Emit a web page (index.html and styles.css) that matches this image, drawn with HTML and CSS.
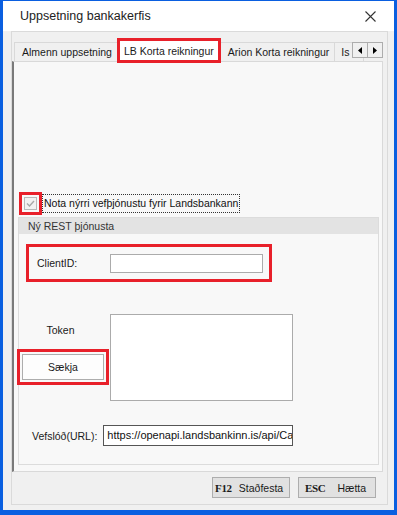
FILE: index.html
```html
<!DOCTYPE html>
<html>
<head>
<meta charset="utf-8">
<link rel="stylesheet" href="styles.css">
</head>
<body>
<div class="window">
  <div class="titlebar">
    <span class="title">Uppsetning bankakerfis</span>
    <svg class="close" width="11" height="11" viewBox="0 0 11 11"><path d="M0.5 0.5 L10.5 10.5 M10.5 0.5 L0.5 10.5" stroke="#333" stroke-width="1.1" fill="none"/></svg>
  </div>
  <div class="client">
    <div class="frame">
      <div class="tabstrip">
        <div class="tab">Almenn uppsetning</div>
        <div class="tab active">LB Korta reikningur</div>
        <div class="tab">Arion Korta reikningur</div>
        <div class="tab clipped">Is</div>
        <div class="scroller">
          <span class="sbtn"><svg width="4" height="7" viewBox="0 0 4 7"><path d="M4 0 L0 3.5 L4 7 Z" fill="#000"/></svg></span>
          <span class="sbtn"><svg width="4" height="7" viewBox="0 0 4 7"><path d="M0 0 L4 3.5 L0 7 Z" fill="#000"/></svg></span>
        </div>
      </div>
      <div class="page">
        <div class="checkrow">
          <span class="checkbox"><svg width="11" height="11" viewBox="0 0 11 11"><path d="M2 5.5 L4.5 8 L9 3" stroke="#a8a8a8" stroke-width="1.4" fill="none"/></svg></span>
          <span class="checklabel">Nota nýrri vefþjónustu fyrir Landsbankann</span>
        </div>
        <div class="group">
          <div class="group-head">Ný REST þjónusta</div>
          <div class="group-body">
            <div class="clientid">
              <span class="lbl-client">ClientID:</span>
              <span class="input short"></span>
            </div>
            <div class="token-row">
              <div class="token-col">
                <span class="lbl-token">Token</span>
                <span class="button">Sækja</span>
              </div>
              <span class="textarea"></span>
            </div>
            <div class="url-row">
              <span class="lbl-url">Vefslóð(URL):</span>
              <span class="input url">https://openapi.landsbankinn.is/api/Cards</span>
            </div>
          </div>
        </div>
      </div>
      <div class="buttons">
        <span class="dlgbtn"><b class="key">F12</b>Staðfesta</span>
        <span class="dlgbtn esc"><b class="key">ESC</b>Hætta</span>
      </div>
    </div>
  </div>
</div>
</body>
</html>
```

FILE: styles.css
```css
html, body {
  margin: 0;
  padding: 0;
  background: #ffffff;
}
.window {
  width: 397px;
  height: 515px;
  box-sizing: border-box;
  border-style: solid;
  border-color: #0a5fe0;
  border-width: 1px 3px 5px 3px;
  display: flex;
  flex-direction: column;
  font-family: "Liberation Sans", Arial, sans-serif;
  color: #1a1a1a;
  overflow: hidden;
}
.titlebar {
  height: 30px;
  flex: none;
  background: #ffffff;
  display: flex;
  align-items: center;
  justify-content: space-between;
  padding: 0 18px 0 17px;
}
.title {
  font-size: 12.5px;
  color: #222;
}
.close {
  display: block;
}
.client {
  flex: 1;
  background: #f0f0f0;
  padding: 0 6px 5px 8px;
}
.frame {
  border: 1px solid #dadada;
  height: 100%;
  box-sizing: border-box;
  padding: 8px 4px 0 0;
  display: flex;
  flex-direction: column;
}
.tabstrip {
  display: flex;
  align-items: flex-end;
  height: 21px;
  position: relative;
  padding-left: 2px;
  font-size: 10.5px;
}
.tab {
  height: 19px;
  box-sizing: border-box;
  border: 1px solid #d9d9d9;
  border-bottom: none;
  background: #f0f0f0;
  padding: 0 5px 0 7px;
  display: flex;
  align-items: center;
  white-space: nowrap;
  margin-right: -1px;
}
.tab.active {
  height: 21px;
  background: #ffffff;
  margin: 0 1px 0 2px;
  padding: 0 4px 0 4px;
  outline: 3px solid #e8202a;
  outline-offset: -1px;
  position: relative;
  z-index: 1;
}
.tab.clipped {
  width: 30px;
  overflow: hidden;
  padding-left: 6px;
}
.scroller {
  position: absolute;
  right: 0;
  top: 2px;
  display: flex;
}
.sbtn {
  width: 16px;
  height: 16px;
  box-sizing: border-box;
  border: 1px solid #adadad;
  background: #f0f0f0;
  display: flex;
  align-items: center;
  justify-content: center;
  margin-left: -1px;
}
.sbtn svg {
  display: block;
}
.page {
  background: #f8f8f8;
  border: 1px solid #d9d9d9;
  border-left: 2px solid #7a7a7a;
  padding: 131px 3px 6px 4px;
  display: flex;
  flex-direction: column;
}
.checkrow {
  display: flex;
  align-items: center;
  height: 20px;
  padding-left: 6px;
  font-size: 10.5px;
}
.checkbox {
  width: 13px;
  height: 13px;
  box-sizing: border-box;
  border: 1px solid #b9b9b9;
  background: #f2f2f2;
  display: flex;
  align-items: center;
  justify-content: center;
  outline: 3px solid #e8202a;
  outline-offset: 2px;
  margin-right: 5px;
  margin-top: 1px;
}
.checkbox svg { display: block; }
.checklabel {
  border: 1px dotted #333;
  padding: 2px 1px 2px 1px;
  line-height: 13px;
  color: #111;
}
.group {
  margin-top: 4px;
  border: 1px solid #dcdcdc;
}
.group-head {
  background: #e3e3e3;
  height: 16px;
  line-height: 16px;
  font-size: 10.5px;
  padding-left: 9px;
  color: #333;
}
.group-body {
  padding: 10px 0 18px 7px;
  font-size: 10.5px;
}
.clientid {
  width: 246px;
  height: 38px;
  box-sizing: border-box;
  border: 3px solid #e8202a;
  display: flex;
  align-items: center;
  padding-left: 8px;
}
.lbl-client {
  width: 73px;
}
.input {
  display: block;
  background: #ffffff;
  border: 1px solid #ababab;
  box-sizing: border-box;
}
.input.short {
  width: 153px;
  height: 19px;
}
.token-row {
  display: flex;
  margin-top: 32px;
  margin-left: -7px;
}
.token-col {
  width: 82px;
  margin: 0 6px 0 3px;
  display: flex;
  flex-direction: column;
  align-items: center;
  padding-top: 9px;
}
.lbl-token {
  line-height: 14px;
  margin-right: 5px;
}
.button {
  margin-top: 17px;
  width: 82px;
  height: 26px;
  box-sizing: border-box;
  border: 1px solid #adadad;
  background: #fdfdfd;
  display: flex;
  align-items: center;
  justify-content: center;
  outline: 3px solid #e8202a;
  outline-offset: 2px;
}
.textarea {
  display: block;
  width: 183px;
  height: 87px;
  box-sizing: border-box;
  background: #ffffff;
  border: 1px solid #ababab;
}
.url-row {
  display: flex;
  align-items: center;
  margin-top: 24px;
  margin-left: 6px;
}
.lbl-url {
  margin-right: 6px;
}
.input.url {
  width: 190px;
  height: 21px;
  border: 1px solid #555;
  padding-left: 3px;
  line-height: 19px;
  white-space: nowrap;
  overflow: hidden;
  color: #111;
  font-size: 11px;
}
.buttons {
  display: flex;
  justify-content: flex-end;
  gap: 8px;
  margin-top: 5px;
  padding-right: 7px;
}
.dlgbtn {
  width: 78px;
  height: 21px;
  box-sizing: border-box;
  border: 1px solid #adadad;
  background: #e1e1e1;
  display: flex;
  align-items: center;
  padding-left: 2px;
  font-size: 10.5px;
  white-space: nowrap;
}
.dlgbtn.esc {
  padding-left: 6px;
}
.key {
  font-family: "Liberation Serif", "Times New Roman", serif;
  font-weight: bold;
  font-size: 11px;
  margin-right: 7px;
  letter-spacing: -0.3px;
}
.dlgbtn.esc .key {
  margin-right: 12px;
}
```
